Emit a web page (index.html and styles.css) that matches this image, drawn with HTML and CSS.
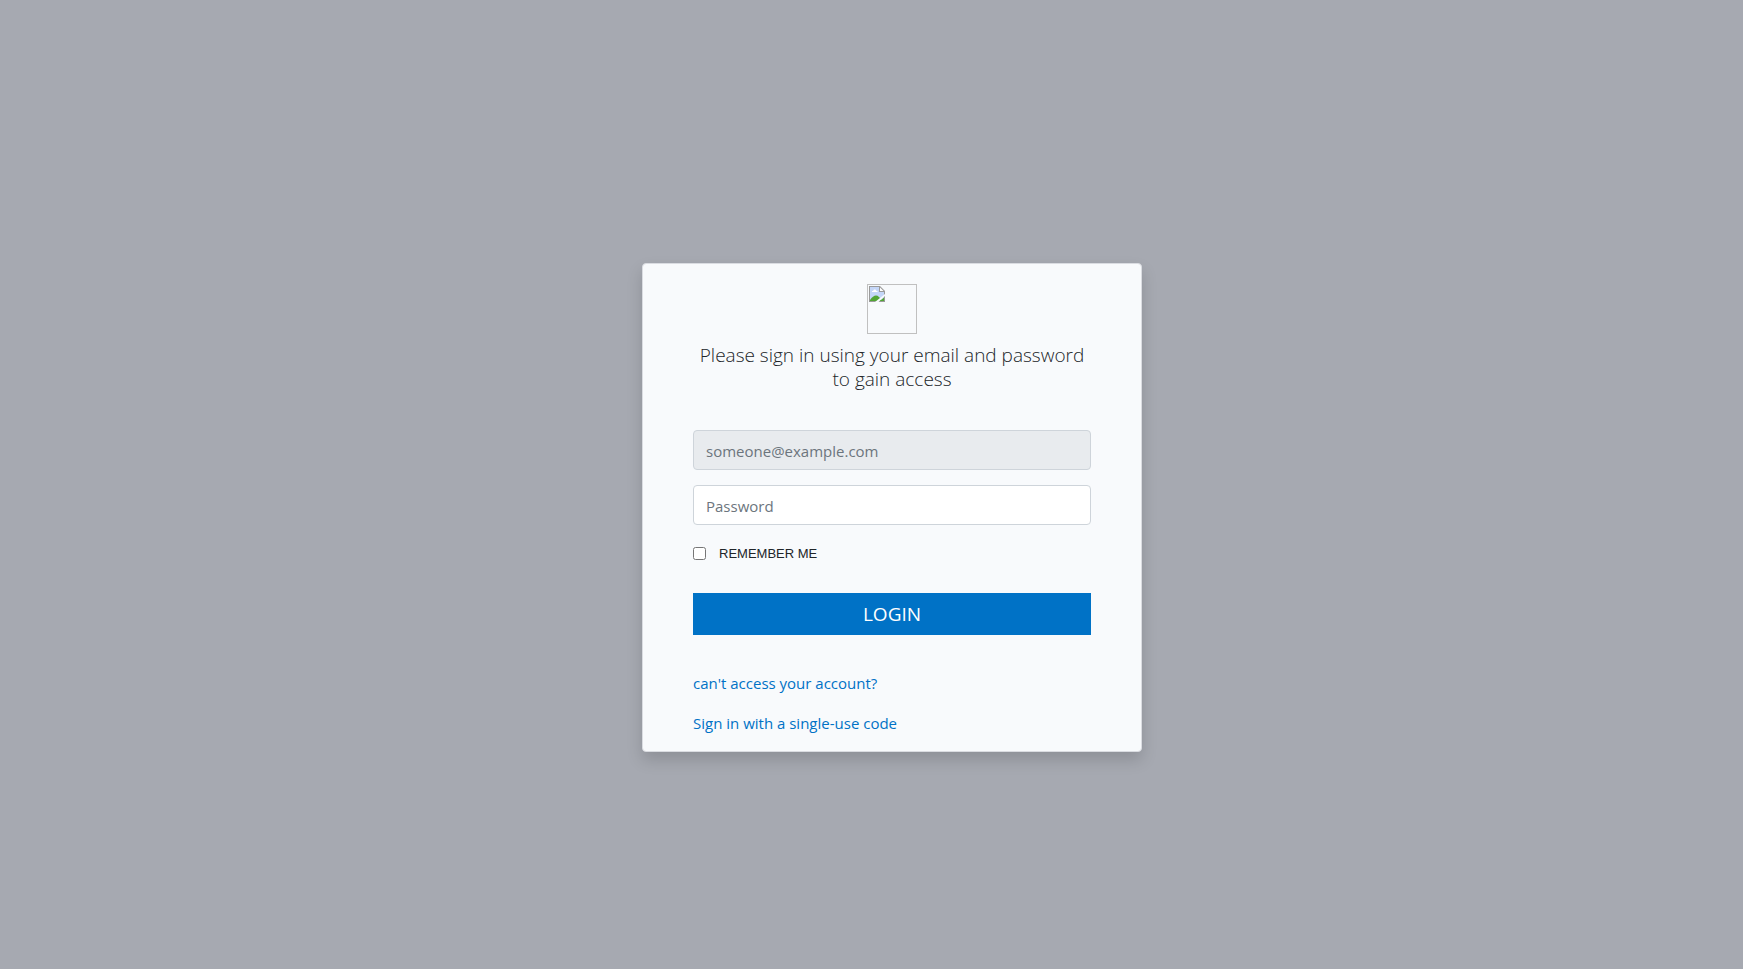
FILE: index.html
```html
<!DOCTYPE html>
<html lang="en">
<head>
    <meta charset="utf-8">
    <meta name="viewport" content="width=device-width, initial-scale=1">
    <title>Login</title>
    <link rel="stylesheet" href="styles.css">
</head>
<body>
    <div class="container">
        <div class="card">
            <div class="logo">
                <svg width="16" height="16" viewBox="0 0 16 16">
                    <path d="M0 0H11L16 5V16H0Z" fill="#9a9a9a"/>
                    <path d="M1 1H10V6H15V15H1Z" fill="#c4d6f8"/>
                    <path d="M11 1.500V5H14.500Z" fill="#fff"/>
                    <path d="M3 6V5H4L5 3.500H6.500L7.500 5H8.500V6Z" fill="#fff"/>
                    <path d="M1 15V14Q4 9.500 7 9.500Q10 9.500 13 15Z" fill="#52a535"/>
                    <path d="M16 8V10L9.500 16H6Z" fill="#f8fafc"/>
                    <path d="M11 15L15 11.500V15Z" fill="#52a535"/>
                </svg>
            </div>
            <h5 class="title">Please sign in using your email and password to gain access</h5>
            <form class="form" onsubmit="return false">
                <input type="email" class="form-control email" placeholder="someone@example.com" aria-label="Email">
                <input type="password" class="form-control" placeholder="Password" aria-label="Password">
                <div class="remember">
                    <input type="checkbox" id="remember">
                    <label for="remember">REMEMBER ME</label>
                </div>
                <button type="submit" class="btn">LOGIN</button>
            </form>
            <div class="links">
                <a href="#">can't access your account?</a>
                <a href="#">Sign in with a single-use code</a>
            </div>
        </div>
    </div>
</body>
</html>
```

FILE: styles.css
```css
*{box-sizing:border-box;}
body{margin:0;background-color:#a6a9b1;font-family:"Segoe UI","Open Sans","Noto Sans",sans-serif;font-size:15px;line-height:24px;color:#212529;}
.container{display:flex;align-items:center;justify-content:center;min-height:100vh;padding:46px 0 0 41px;}
.card{width:100%;max-width:500px;padding:20px 50px 16px;background-color:#f8fafc;border:1px solid #dadce1;border-radius:4px;box-shadow:0 8px 16px rgba(0,0,0,.15);}
.logo{width:50px;height:50px;margin:0 auto 9px;padding:1px;border:1px solid #c0c0c0;}
.logo svg{display:block;}
.title{margin:0 0 39px;font-size:19px;font-weight:300;line-height:24px;text-align:center;}
.form{display:flex;flex-direction:column;}
.form-control{width:100%;height:40px;margin:0 0 15px;padding:8px 12px 6px;font-family:inherit;font-size:15px;color:#495057;background-color:#fff;border:1px solid #ced4da;border-radius:4px;}
.form-control::placeholder{color:#6c757d;opacity:1;}
.email{background-color:#e8ebee;}
.remember{display:flex;align-items:center;gap:13px;height:27px;margin-bottom:26px;font-family:Arial,"Liberation Sans",sans-serif;font-size:13px;}
.remember input{width:13px;height:13px;margin:0;}
.btn{height:42px;padding:0;font-family:inherit;font-size:19px;color:#fff;background-color:#0072c6;border:0;cursor:pointer;}
.links{display:flex;flex-direction:column;align-items:flex-start;gap:16px;margin-top:36px;}
.links a{color:#0072c6;text-decoration:none;}
.links a:hover{text-decoration:underline;}
```
